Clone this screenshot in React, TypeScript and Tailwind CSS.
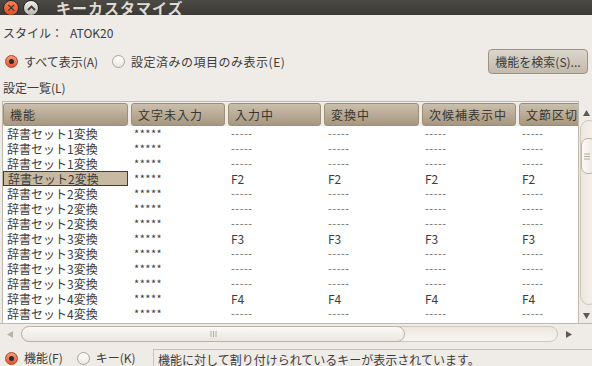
import React from "react";

// キーカスタマイズ ダイアログ (Ubuntu Ambiance 風)

type Row = { name: string; keys: string[]; selected?: boolean };

const dash = "-----";

const rows: Row[] = [
  { name: "辞書セット1変換", keys: [dash, dash, dash, dash] },
  { name: "辞書セット1変換", keys: [dash, dash, dash, dash] },
  { name: "辞書セット1変換", keys: [dash, dash, dash, dash] },
  { name: "辞書セット2変換", keys: ["F2", "F2", "F2", "F2"], selected: true },
  { name: "辞書セット2変換", keys: [dash, dash, dash, dash] },
  { name: "辞書セット2変換", keys: [dash, dash, dash, dash] },
  { name: "辞書セット2変換", keys: [dash, dash, dash, dash] },
  { name: "辞書セット3変換", keys: ["F3", "F3", "F3", "F3"] },
  { name: "辞書セット3変換", keys: [dash, dash, dash, dash] },
  { name: "辞書セット3変換", keys: [dash, dash, dash, dash] },
  { name: "辞書セット3変換", keys: [dash, dash, dash, dash] },
  { name: "辞書セット4変換", keys: ["F4", "F4", "F4", "F4"] },
  { name: "辞書セット4変換", keys: [dash, dash, dash, dash] },
  { name: "辞書セット4変換", keys: [dash, dash, dash, dash] },
];

const headers = ["機能", "文字未入力", "入力中", "変換中", "次候補表示中", "文節区切り"];
const widths = ["w-[125px]", "w-[94px]", "w-[93px]", "w-[95px]", "w-[94px]", "w-[94px]"];

const Radio = ({ checked }: { checked?: boolean }) =>
  checked ? (
    <span className="flex h-[13px] w-[13px] shrink-0 items-center justify-center rounded-full border border-[#b6452a] bg-gradient-to-b from-[#f69a7a] to-[#e0552f]">
      <span className="block h-[5px] w-[5px] rounded-full bg-[#2d2b28]" />
    </span>
  ) : (
    <span className="block h-[13px] w-[13px] shrink-0 rounded-full border border-[#a8a298] bg-gradient-to-b from-[#ffffff] to-[#ebe8e3]" />
  );

const Tri = ({ dir, color = "#5c5a56" }: { dir: "up" | "down" | "left" | "right"; color?: string }) => {
  const pts = {
    up: "0,6 3.5,0 7,6",
    down: "0,0 7,0 3.5,6",
    left: "6,0 6,7 0,3.5",
    right: "0,0 0,7 6,3.5",
  }[dir];
  return (
    <svg width="7" height="7" viewBox="0 0 7 7">
      <polygon points={pts} fill={color} />
    </svg>
  );
};

export default function App() {
  return (
    <div
      className="flex h-[366px] w-[592px] flex-col overflow-hidden bg-[#efebe6] text-[12px] text-[#3c3c3c]"
      style={{ fontFamily: '"Noto Sans CJK JP", "Noto Sans", sans-serif' }}
    >
      {/* タイトルバー */}
      <div className="flex h-[15px] shrink-0 items-center overflow-hidden bg-gradient-to-b from-[#4b4a45] to-[#3b3a36]">
        <span className="ml-[3px] flex h-[16px] w-[16px] items-center justify-center rounded-full border border-[#2a2926] bg-gradient-to-b from-[#f7845a] to-[#dc4c22] text-[10px] font-bold leading-none text-[#3b2a22]">
          ×
        </span>
        <span className="ml-[4px] flex h-[16px] w-[16px] items-center justify-center rounded-full border border-[#2a2926] bg-gradient-to-b from-[#f2f0ea] to-[#b9b5ad]">
          <svg width="9" height="6" viewBox="0 0 9 6">
            <polyline points="1,5 4.5,1.5 8,5" fill="none" stroke="#3c3b37" strokeWidth="1.8" />
          </svg>
        </span>
        <span className="ml-[17px] text-[15px] font-bold leading-none tracking-[1px] text-[#dfdbd2]">
          キーカスタマイズ
        </span>
      </div>

      {/* スタイル */}
      <div className="flex h-[33px] shrink-0 items-center px-[3px] pt-[3px]">
        <span>スタイル：</span>
        <span className="ml-[7px]">ATOK20</span>
      </div>

      {/* 表示切替 */}
      <div className="flex h-[27px] shrink-0 items-center pl-[5px] pr-[4px]">
        <Radio checked />
        <span className="ml-[6px]">すべて表示(A)</span>
        <span className="ml-[14px] flex">
          <Radio />
        </span>
        <span className="ml-[6px] tracking-[0.5px]">設定済みの項目のみ表示(E)</span>
        <button className="ml-auto h-[25px] w-[100px] rounded-[4px] border border-[#9d9282] bg-gradient-to-b from-[#dcd6cc] to-[#c3baac] text-[12px] text-[#3c3c3c]">
          機能を検索(S)...
        </button>
      </div>

      {/* 設定一覧 */}
      <div className="flex h-[26px] shrink-0 items-center px-[3px]">設定一覧(L)</div>

      {/* テーブル */}
      <div className="flex h-[222px] shrink-0 pl-[2px]">
        <div className="w-[577px] overflow-hidden border border-b-0 border-[#c2b9aa] bg-white">
          <div className="flex h-[24px] gap-[3px] bg-[#efebe6] pt-[1px]">
            {headers.map((h, i) => (
              <div
                key={h}
                className={`${widths[i]} flex h-[23px] shrink-0 items-center overflow-hidden whitespace-nowrap rounded-[3px] border border-[#9e8f78] bg-gradient-to-b from-[#cbbfad] to-[#a7977f] pl-[6px] tracking-[1px] text-[#3a3630]`}
              >
                {h}
              </div>
            ))}
          </div>
          {rows.map((r, idx) => (
            <div key={idx} className="flex h-[15px] gap-[3px] leading-[15px]">
              <div
                className={`${widths[0]} shrink-0 whitespace-nowrap pl-[4px] ${
                  r.selected ? "border border-[#3a3d45] bg-[#c8b9a3] pl-[3px] leading-[13px]" : ""
                }`}
              >
                {r.name}
              </div>
              <div className={`${widths[1]} shrink-0 pl-[3px] text-[11px] tracking-[0.5px]`}>*****</div>
              {r.keys.map((k, j) => (
                <div
                  key={j}
                  className={`${widths[j + 2]} shrink-0 ${j === 1 ? "pl-[4px]" : "pl-[3px]"} ${
                    k === dash ? "text-[11px] tracking-[0.5px] text-[#6d6c6a]" : ""
                  }`}
                >
                  {k}
                </div>
              ))}
            </div>
          ))}
        </div>

        {/* 縦スクロールバー */}
        <div className="flex w-[13px] flex-col items-center">
          <div className="mt-[8px] flex h-[8px] items-center pl-[2px]">
            <Tri dir="up" />
          </div>
          <div className="ml-[6px] mt-[3px] flex h-[185px] w-[18px] shrink-0 flex-col rounded-full border border-[#cfc7ba] bg-gradient-to-r from-[#ece7df] to-[#f6f3ee] pt-[17px]">
            <div className="flex h-[36px] w-full items-center justify-center rounded-[7px] border border-[#bdb3a3] bg-gradient-to-r from-[#fbfaf8] to-[#ebe6de] pr-[4px]">
              <svg width="6" height="7" viewBox="0 0 6 7">
                <line x1="0" y1="1" x2="6" y2="1" stroke="#b2aa9c" />
                <line x1="0" y1="3.5" x2="6" y2="3.5" stroke="#b2aa9c" />
                <line x1="0" y1="6" x2="6" y2="6" stroke="#b2aa9c" />
              </svg>
            </div>
          </div>
          <div className="mt-[7px] flex h-[8px] items-center pl-[2px]">
            <Tri dir="down" />
          </div>
        </div>
      </div>

      {/* 横スクロールバー */}
      <div className="flex h-[26px] shrink-0 items-start border-t border-[#c2b9aa] pl-[7px] pt-[2px]">
        <div className="mt-[5px]">
          <Tri dir="left" color="#b8b3ab" />
        </div>
        <div className="ml-[7px] flex h-[16px] w-[537px] rounded-full border border-[#cfc7ba] bg-gradient-to-b from-[#ece7df] to-[#f7f4ef]">
          <div className="-m-[1px] flex h-[16px] w-[384px] items-center justify-center rounded-full border border-[#bdb3a3] bg-gradient-to-b from-[#fbfaf8] to-[#ebe6de]">
            <svg width="7" height="6" viewBox="0 0 7 6">
              <line x1="1" y1="0" x2="1" y2="6" stroke="#b2aa9c" />
              <line x1="3.5" y1="0" x2="3.5" y2="6" stroke="#b2aa9c" />
              <line x1="6" y1="0" x2="6" y2="6" stroke="#b2aa9c" />
            </svg>
          </div>
        </div>
        <div className="ml-[8px] mt-[5px]">
          <Tri dir="right" />
        </div>
      </div>

      {/* 下部 */}
      <div className="flex h-[17px] shrink-0 items-end pl-[5px]">
        <div className="flex h-[17px] w-[148px] shrink-0 items-center pt-[1px]">
          <Radio checked />
          <span className="ml-[6px]">機能(F)</span>
          <span className="ml-[14px] flex">
            <Radio />
          </span>
          <span className="ml-[6px]">キー(K)</span>
        </div>
        <div className="flex h-[17px] flex-1 items-center whitespace-nowrap border-l border-t border-[#c9c1b4] pl-[4px] pt-[3px]">
          機能に対して割り付けられているキーが表示されています。
        </div>
      </div>
    </div>
  );
}
